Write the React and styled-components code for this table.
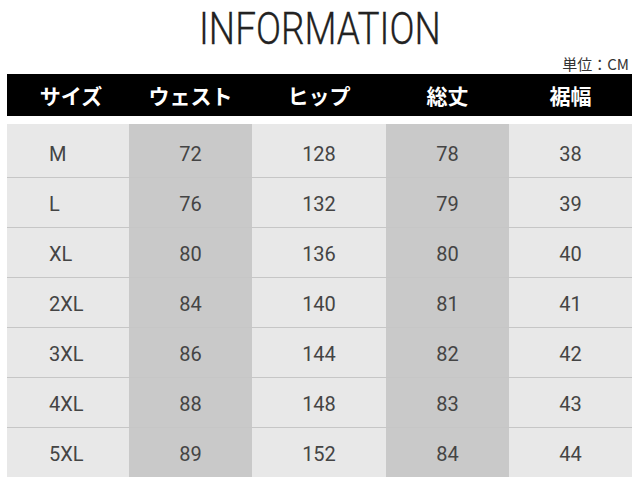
import React from "react";
import styled, { createGlobalStyle } from "styled-components";

const Global = createGlobalStyle`
  html, body { margin: 0; padding: 0; background: #fff; }
  body { width: 640px; height: 488px; overflow: hidden; }
`;

const Page = styled.div`
  width: 640px;
  height: 488px;
  background: #fff;
  display: flex;
  flex-direction: column;
`;

const Title = styled.h1`
  margin: 0;
  height: 54px;
  box-sizing: border-box;
  padding-top: 8px;
  text-align: center;
  font-family: Roboto, "Liberation Sans", sans-serif;
  font-weight: 300;
  font-size: 44px;
  line-height: 42px;
  color: #222;
`;

const TitleText = styled.span`
  display: inline-block;
  transform: scaleX(0.84);
  -webkit-text-stroke: 0.3px #222;
`;

const Unit = styled.div`
  height: 20px;
  line-height: 20px;
  text-align: right;
  padding-right: 11px;
  font-family: "Noto Sans CJK JP", sans-serif;
  font-size: 15px;
  color: #333;
`;

const cols = "122px 123px 134px 123px 123px";

const Header = styled.div`
  margin-left: 7px;
  width: 625px;
  height: 42px;
  background: #000;
  display: grid;
  grid-template-columns: ${cols};
  margin-bottom: 8px;
`;

const HeadCell = styled.div`
  display: flex;
  align-items: center;
  justify-content: center;
  padding-left: ${(p) => (p.$first ? "6px" : "0")};
  color: #fff;
  font-family: "Noto Sans CJK JP", sans-serif;
  font-weight: 700;
  font-size: 21px;
`;

const Table = styled.div`
  margin-left: 7px;
  width: 625px;
  display: flex;
  flex-direction: column;
`;

const Row = styled.div`
  display: grid;
  grid-template-columns: ${cols};
  height: 50px;
  &:first-child { height: 53px; }
`;

const Cell = styled.div`
  display: flex;
  align-items: center;
  justify-content: ${(p) => (p.$left ? "flex-start" : "center")};
  padding-left: ${(p) => (p.$left ? "42px" : "0")};
  padding-top: ${(p) => (p.$top ? "6px" : "3px")};
  box-sizing: border-box;
  background: ${(p) => (p.$dark ? "#c9c9c9" : "#e8e8e8")};
  border-top: ${(p) => (p.$top ? "none" : "1px solid #c6c6c6")};
  font-family: Roboto, "Liberation Sans", sans-serif;
  font-weight: 400;
  font-size: 20px;
  color: #444;
`;

const headers = ["サイズ", "ウェスト", "ヒップ", "総丈", "裾幅"];
const rows = [
  ["M", "72", "128", "78", "38"],
  ["L", "76", "132", "79", "39"],
  ["XL", "80", "136", "80", "40"],
  ["2XL", "84", "140", "81", "41"],
  ["3XL", "86", "144", "82", "42"],
  ["4XL", "88", "148", "83", "43"],
  ["5XL", "89", "152", "84", "44"],
];

export default function App() {
  return (
    <Page>
      <Global />
      <Title>
        <TitleText>INFORMATION</TitleText>
      </Title>
      <Unit>単位：CM</Unit>
      <Header>
        {headers.map((h, i) => (
          <HeadCell key={h} $first={i === 0}>
            {h}
          </HeadCell>
        ))}
      </Header>
      <Table>
        {rows.map((r, ri) => (
          <Row key={r[0]}>
            {r.map((v, ci) => (
              <Cell
                key={ci}
                $left={ci === 0}
                $dark={ci === 1 || ci === 3}
                $top={ri === 0}
              >
                {v}
              </Cell>
            ))}
          </Row>
        ))}
      </Table>
    </Page>
  );
}
